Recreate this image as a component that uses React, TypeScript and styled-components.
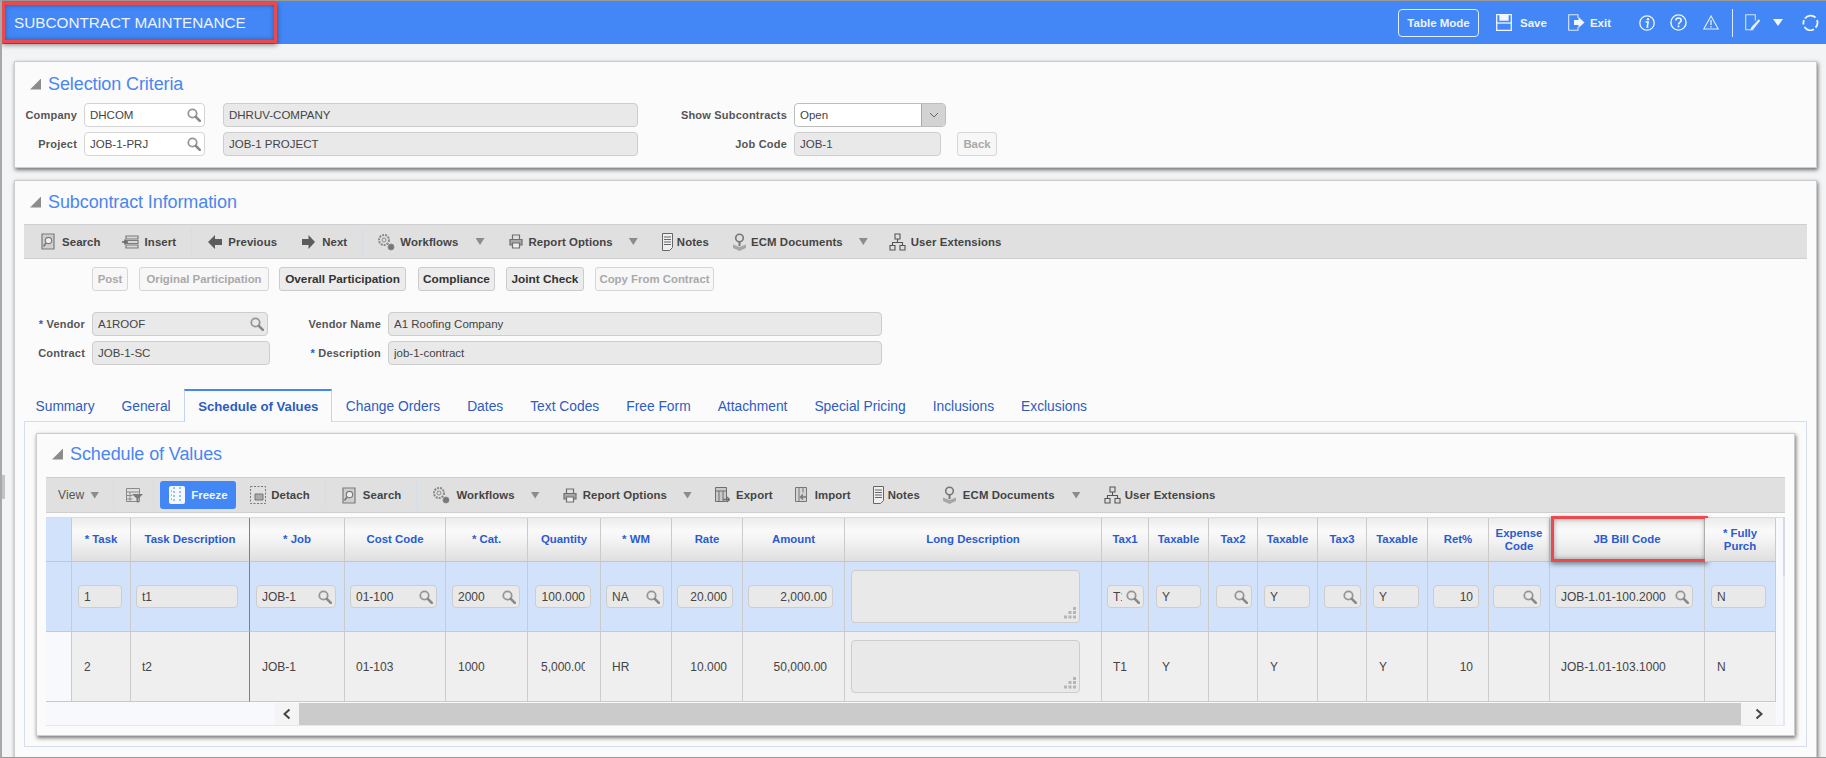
import React from "react";
import styled, { createGlobalStyle } from "styled-components";

const Global = createGlobalStyle`
  html, body { margin: 0; padding: 0; background: #f2f4f6; overflow: hidden; }
  body { font-family: "Liberation Sans", Arial, sans-serif; color: #444; }
  * { box-sizing: border-box; }
`;

const Page = styled.div`
  position: relative;
  width: 1826px;
  height: 758px;
  overflow: hidden;
  background: #f2f4f6;
  border-top: 1px solid #999;
  border-bottom: 1px solid #999;
  border-left: 2px solid #a8a8a8;
`;

const SideHandle = styled.div`
  position: absolute;
  left: 0;
  top: 474px;
  width: 3px;
  height: 24px;
  background: #c4c4c4;
`;

const Highlight = styled.div`
  position: absolute;
  border: 3px solid #ea4a4f;
  box-shadow: 0 2px 5px rgba(0, 0, 0, 0.45), inset 0 0 5px rgba(0, 0, 0, 0.35);
  pointer-events: none;
`;

const Header = styled.header`
  position: relative;
  height: 43px;
  background: #4287f5;
  display: flex;
  align-items: center;
  justify-content: space-between;
  padding: 0 7px 0 12px;
`;

const TitleBox = styled(Highlight)`
  left: 0;
  top: 1px;
  width: 275px;
  height: 41px;
`;

const HeadBox = styled(Highlight)`
  left: 1px;
  top: -2px;
  width: 157px;
  height: 46px;
`;

const PageTitle = styled.h1`
  margin: 0;
  font-size: 15.3px;
  font-weight: 400;
  color: #eef4ff;
`;

const HeaderActions = styled.div`
  display: flex;
  align-items: center;
`;

const ModeButton = styled.button`
  width: 81px;
  height: 28px;
  padding: 0;
  border: 1.5px solid #e4eeff;
  border-radius: 4px;
  background: transparent;
  color: #eef4ff;
  font: bold 11.5px "Liberation Sans", Arial, sans-serif;
`;

const HeaderAction = styled.span<{ $ml: number; $gap?: number }>`
  display: inline-flex;
  align-items: center;
  gap: ${p => p.$gap ?? 0}px;
  margin-left: ${p => p.$ml}px;
  color: #eef4ff;
  font-size: 11.5px;
  font-weight: bold;
`;

const HeaderDivider = styled.span`
  width: 1px;
  height: 28px;
  margin-left: 13px;
  background: #dce8ff;
`;

const Panel = styled.section<{ $mt: number; $pt: number; $pb: number }>`
  width: 1803px;
  margin: ${p => p.$mt}px 0 0 12px;
  padding: ${p => p.$pt}px 9px ${p => p.$pb}px 9px;
  background: #fbfbfb;
  border: 1px solid #ccc;
  box-shadow: 1px 2px 4px rgba(0, 0, 0, 0.55);
`;

const TitleRow = styled.div`
  display: flex;
  align-items: center;
  height: 24px;
  padding-left: 6px;
`;

const Collapse = styled.span`
  width: 11px;
  height: 11px;
  margin-right: 7px;
  background: #8c8c8c;
  clip-path: polygon(100% 0, 100% 100%, 0 100%);
`;

const SectionTitle = styled.h2`
  margin: 0;
  font-size: 18px;
  font-weight: 400;
  color: #4a86f2;
  letter-spacing: -0.1px;
`;

const FormRow = styled.div<{ $mt?: number }>`
  display: flex;
  align-items: center;
  height: 24px;
  margin-top: ${p => p.$mt ?? 5}px;
  font-size: 11.5px;
`;

const Label = styled.label<{ $w: number }>`
  width: ${p => p.$w}px;
  margin-right: 7px;
  flex: none;
  text-align: right;
  font-size: 11px;
  font-weight: bold;
  color: #555;
  letter-spacing: 0.2px;
  white-space: nowrap;
`;

const Star = styled.span`
  color: #2a5bd0;
`;

const Field = styled.div<{ $w: number; $h?: number; $white?: boolean; $ml?: number; $right?: boolean }>`
  width: ${p => p.$w}px;
  height: ${p => p.$h ?? 24}px;
  flex: none;
  display: flex;
  align-items: center;
  gap: 4px;
  margin-left: ${p => p.$ml ?? 0}px;
  padding: 0 ${p => (p.$right ? 5 : 3)}px 0 5px;
  background: ${p => (p.$white ? "#fff" : "#e9e9e9")};
  border: 1.5px solid ${p => (p.$white ? "#d4d4d4" : "#cdcdcd")};
  border-radius: 4px;
  color: #444;
`;

const FieldText = styled.span<{ $right?: boolean }>`
  flex: 1;
  min-width: 0;
  overflow: hidden;
  white-space: nowrap;
  text-align: ${p => (p.$right ? "right" : "left")};
`;

const Select = styled(Field)`
  padding-right: 0;
  border-color: #bdbdbd;
  overflow: hidden;
`;

const SelectToggle = styled.span`
  width: 24px;
  height: 100%;
  flex: none;
  display: flex;
  align-items: center;
  justify-content: center;
  background: #d3d3d3;
  border-left: 1px solid #aaa;
`;

const ActionButton = styled.button<{ $w: number; $off?: boolean; $ml?: number }>`
  width: ${p => p.$w}px;
  height: 24px;
  flex: none;
  margin-left: ${p => p.$ml ?? 0}px;
  padding: 0;
  background: ${p => (p.$off ? "#f7f7f7" : "#ececec")};
  border: 1px solid ${p => (p.$off ? "#d6d6d6" : "#cbcbcb")};
  border-radius: 3px;
  color: ${p => (p.$off ? "#a9a9a9" : "#333")};
  font: bold ${p => (p.$off ? 11.4 : 11.8)}px "Liberation Sans", Arial, sans-serif;
  white-space: nowrap;
`;

const ButtonRow = styled.div`
  display: flex;
  margin-top: 8px;
  padding-left: 68px;
`;

const Toolbar = styled.div<{ $h: number; $mt: number }>`
  display: flex;
  align-items: center;
  height: ${p => p.$h}px;
  margin-top: ${p => p.$mt}px;
  background: #e0e0e0;
  border-top: 1px solid #cfcfcf;
  border-bottom: 1px solid #cfcfcf;
`;

const ToolButton = styled.span<{ $ml: number; $gap: number }>`
  display: inline-flex;
  align-items: center;
  flex: none;
  gap: ${p => p.$gap}px;
  margin-left: ${p => p.$ml}px;
  font-size: 11.4px;
  font-weight: bold;
  color: #444;
  letter-spacing: 0.1px;
  white-space: nowrap;
`;

const ViewMenu = styled(ToolButton)`
  font-weight: 400;
  font-size: 12px;
  color: #555;
`;

const ToolDivider = styled.span<{ $ml: number }>`
  width: 1px;
  height: 28px;
  flex: none;
  margin-left: ${p => p.$ml}px;
  background: #d6dde6;
`;

const Caret = styled.span<{ $ml: number }>`
  width: 9px;
  height: 7px;
  flex: none;
  margin-left: ${p => p.$ml}px;
  background: #8c8c8c;
  clip-path: polygon(0 0, 100% 0, 50% 100%);
`;

const FreezeButton = styled.span<{ $ml: number }>`
  display: inline-flex;
  align-items: center;
  gap: 6px;
  width: 76px;
  height: 28px;
  flex: none;
  margin-left: ${p => p.$ml}px;
  padding-left: 9px;
  background: #4287f5;
  border-radius: 3px;
  color: #f1f6ff;
  font-size: 11.5px;
  font-weight: bold;
`;

const TabStrip = styled.nav`
  position: relative;
  z-index: 1;
  display: flex;
  height: 33px;
  margin: 24px 0 0 -2px;
`;

const Tab = styled.a<{ $active?: boolean }>`
  display: flex;
  align-items: center;
  height: ${p => (p.$active ? 33 : 32)}px;
  padding: 0 ${p => (p.$active ? 13 : 12.5)}px;
  font-size: ${p => (p.$active ? 13.2 : 13.8)}px;
  font-weight: ${p => (p.$active ? "bold" : 400)};
  color: #2f5cc0;
  background: ${p => (p.$active ? "#fbfbfb" : "transparent")};
  border-top: 2px solid ${p => (p.$active ? "#4287f5" : "transparent")};
  border-left: 1px solid ${p => (p.$active ? "#c2d4ee" : "transparent")};
  border-right: 1px solid ${p => (p.$active ? "#c2d4ee" : "transparent")};
  white-space: nowrap;
`;

const TabBody = styled.div`
  width: 1783px;
  height: 326px;
  margin-top: -1px;
  padding: 11px 11px 0;
  border: 1px solid #d5dfec;
  background: #fbfbfb;
`;

const InnerPanel = styled.section`
  height: 303px;
  padding: 8px 9px 0;
  background: #fbfbfb;
  border: 1px solid #ccc;
  box-shadow: 1px 2px 4px rgba(0, 0, 0, 0.55);
`;

const GridArea = styled.div`
  margin-top: 4px;
  display: flex;
  width: 1739px;
  background: #f8f9fc;
  border-top: 1px solid #dcdcdc;
  border-bottom: 1px solid #e4e7ec;
`;

const GridMain = styled.div`
  width: 1730px;
  flex: none;
`;

const GridTable = styled.table`
  position: relative;
  width: 1730px;
  table-layout: fixed;
  border-collapse: separate;
  border-spacing: 0;
`;

const HeadCell = styled.th<{ $freeze?: boolean }>`
  position: relative;
  height: 44px;
  padding: 0 2px;
  background: linear-gradient(#ebebeb 0%, #fafafa 30%, #f2f2f2 55%, #dfdfdf 100%);
  border-right: 1px solid ${p => (p.$freeze ? "#4287f5" : "#cbcbcb")};
  border-bottom: 1px solid #c6c6c6;
  font-size: 11.4px;
  line-height: 13px;
  font-weight: bold;
  color: #2a5bd0;
`;

const CornerCell = styled.th`
  background: #d2e2fa;
  border-right: 1px solid #cbcbcb;
  border-bottom: 1px solid #c6c6c6;
`;

const BodyCell = styled.td<{ $pad: number; $edit?: boolean; $freeze?: boolean }>`
  height: 70px;
  padding: 0 0 0 ${p => p.$pad}px;
  background: ${p => (p.$edit ? "#d2e2fa" : "#efefef")};
  border-right: 1px solid ${p => (p.$freeze ? "#4287f5" : "#cbcbcb")};
  border-bottom: 1px solid #c9c9c9;
  font-size: 12px;
  color: #444;
`;

const RowMark = styled.td<{ $edit?: boolean }>`
  background: ${p => (p.$edit ? "#d2e2fa" : "#f8f9fc")};
  border-right: 1px solid #cbcbcb;
  border-bottom: 1px solid #c9c9c9;
`;

const CellText = styled.div<{ $w: number; $right?: boolean }>`
  width: ${p => p.$w}px;
  margin-left: 6px;
  overflow: hidden;
  white-space: nowrap;
  text-align: ${p => (p.$right ? "right" : "left")};
`;

const NoteBox = styled.div`
  position: relative;
  width: 229px;
  height: 53px;
  background: #e9e9e9;
  border: 1.5px solid #cdcdcd;
  border-radius: 4px;
`;

const Grip = styled.svg`
  position: absolute;
  right: 2px;
  bottom: 2px;
`;

const ScrollBar = styled.div`
  display: flex;
  height: 22px;
  margin-top: 1px;
`;

const ScrollRest = styled.div`
  width: 229px;
  background: #f8f9fc;
`;

const ScrollEnd = styled.div<{ $w: number }>`
  width: ${p => p.$w}px;
  display: flex;
  align-items: center;
  justify-content: center;
  background: #f4f4f4;
`;

const ScrollTrack = styled.div`
  flex: 1;
  background: #cbcbcb;
`;

const SideRail = styled.div`
  width: 9px;
  flex: none;
  background:
    linear-gradient(#d5dae2, #d5dae2) right top / 2px 58px no-repeat,
    linear-gradient(#e6eaf0, #e6eaf0) right top / 2px 100% no-repeat;
`;

const GlassSvg = styled.svg`
  flex: none;
`;

const Grey = "#7b7b7b";

const Glass = () => (
  <GlassSvg width="14" height="14" viewBox="0 0 14 14" fill="none">
    <circle cx="5.500" cy="5.500" r="4.200" stroke="#969696" strokeWidth="1.800" />
    <path d="M8.800 8.800 12.800 12.800" stroke="#888" strokeWidth="2.600" strokeLinecap="round" />
  </GlassSvg>
);

const Chevron = ({ dir }: { dir: "l" | "r" | "d" }) => (
  <svg width="10" height="12" viewBox="0 0 10 12" fill="none">
    <path
      d={dir === "l" ? "M7.5 1.5 2.5 6l5 4.5" : dir === "r" ? "M2.5 1.5 7.5 6l-5 4.5" : "M1 4l4 4 4-4"}
      stroke={dir === "d" ? "#666" : "#444"}
      strokeWidth={dir === "d" ? 1 : 2}
    />
  </svg>
);

const DocSearchIcon = () => (
  <svg width="14" height="17" viewBox="0 0 14 17" fill="none" stroke={Grey} strokeWidth="1.2">
    <path d="M1 1h12v15H1z" fill="#cfcfcf" />
    <circle cx="7.5" cy="7.5" r="3.2" fill="#eee" />
    <path d="M5 10 2.5 13.5" strokeWidth="1.8" />
  </svg>
);

const InsertIcon = () => (
  <svg width="17" height="14" viewBox="0 0 17 14" fill="none" stroke={Grey} strokeWidth="1.2">
    <path d="M4 1h12v3H4zM4 5.5h12v3H4zM4 10h12v3H4z" fill="#d8d8d8" />
    <path d="M0 7h6M3 4.5v5" strokeWidth="1.6" stroke="#666" />
  </svg>
);

const ArrowLeft = () => (
  <svg width="14" height="14" viewBox="0 0 14 14" fill="#5c5c5c">
    <path d="M0 7 7 0v4h7v6H7v4z" />
  </svg>
);

const ArrowRight = () => (
  <svg width="13" height="14" viewBox="0 0 13 14" fill="#5c5c5c">
    <path d="M13 7 6.500 0v4H0v6h6.500v4z" />
  </svg>
);

const GearsIcon = () => (
  <svg width="18" height="18" viewBox="0 0 18 18" fill="none" stroke="#8a8a8a">
    <circle cx="7" cy="7" r="5" strokeWidth="2" strokeDasharray="2 1" />
    <circle cx="7" cy="7" r="2" strokeWidth="1" />
    <circle cx="14" cy="14" r="3" fill="#777" strokeWidth="1" />
  </svg>
);

const PrinterIcon = () => (
  <svg width="14" height="15" viewBox="0 0 14 15" fill="none" stroke="#6f6f6f" strokeWidth="1.2">
    <path d="M3.500 5V1h7v4" />
    <path d="M1 5.500h12V11H1z" fill="#a8a8a8" />
    <path d="M3.500 9h7v5h-7z" fill="#eee" />
  </svg>
);

const NotesIcon = () => (
  <svg width="11" height="18" viewBox="0 0 11 18" fill="none" stroke="#666" strokeWidth="1">
    <path d="M.5.500h10v14l-3 3h-7z" fill="#efefef" />
    <path d="M2 4h7M2 6.500h7M2 9h7M2 11.500h7" />
  </svg>
);

const EcmIcon = () => (
  <svg width="15" height="18" viewBox="0 0 15 18" fill="none">
    <circle cx="7.500" cy="5" r="3.800" stroke="#777" strokeWidth="1.600" />
    <path d="M7.500 9v4" stroke="#777" strokeWidth="2" />
    <path d="M1 11.500 7.500 14l6.500-2.500V15l-6.500 3L1 15z" fill="#a6a6a6" />
  </svg>
);

const OrgIcon = () => (
  <svg width="17" height="18" viewBox="0 0 17 18" fill="none" stroke="#555" strokeWidth="1.100">
    <path d="M6 1h5v5H6zM1 12.500h5V17H1zM11 12.500h5V17h-5z" />
    <path d="M8.500 6v3.500M3.500 12.500v-3h10v3" />
  </svg>
);

const ExportIcon = () => (
  <svg width="15" height="16" viewBox="0 0 15 16" fill="none" stroke="#6f6f6f">
    <path d="M.5.500h11v14H.5z" fill="#c9c9c9" />
    <path d="M.5 4h11M4 4v10M8 4v10" />
    <path d="M8 12.500h6M12 10l2.500 2.500L12 15" strokeWidth="1.300" />
  </svg>
);

const ImportIcon = () => (
  <svg width="13" height="16" viewBox="0 0 13 16" fill="none" stroke="#777">
    <path d="M.5.500h11v14H.5z" fill="#d4d4d4" />
    <path d="M4 .5v14M8 .5v5" />
    <path d="M12 10H6M8 7.500 5.500 10 8 12.500" strokeWidth="1.300" />
  </svg>
);

const FilterIcon = () => (
  <svg width="17" height="15" viewBox="0 0 17 15" fill="none" stroke="#8a8a8a">
    <path d="M.5.500h13v13H.5zM.5 4h13M.5 7.500h6M.5 11h6M4 4v9" />
    <path d="M6 6h11l-4.500 4.500V15l-2-1v-3.500z" fill="#7b7b7b" stroke="none" />
  </svg>
);

const FreezeIcon = () => (
  <svg width="16" height="18" viewBox="0 0 16 18">
    <rect width="16" height="18" rx="2" fill="#f4f8ff" />
    <path d="M5 1v16M11 1v16" stroke="#4287f5" strokeDasharray="2 2" />
    <path d="M2 5h1M2 9h1M2 13h1" stroke="#4287f5" />
  </svg>
);

const DetachIcon = () => (
  <svg width="16" height="18" viewBox="0 0 16 18" fill="none" stroke="#777">
    <rect x=".5" y=".5" width="15" height="17" strokeDasharray="2 1.500" />
    <path d="M5 8h8v6H5z" fill="#aaa" />
  </svg>
);

const SaveIcon = () => (
  <svg width="16" height="17" viewBox="0 0 16 17" fill="none" stroke="#f1f6ff" strokeWidth="1.300">
    <path d="M.7.700h14.600v15.600H.7z" />
    <path d="M4 1v5h8V1" fill="#f1f6ff" />
    <path d="M.7 9h14.600" />
  </svg>
);

const ExitIcon = () => (
  <svg width="17" height="17" viewBox="0 0 17 17" fill="none">
    <path d="M10 4V.7H.7v15.600H10V13" stroke="#dce8ff" strokeWidth="1.100" />
    <path d="M6 6h4.500V3l6 5.500-6 5.500v-3H6z" fill="#f1f6ff" />
  </svg>
);

const InfoIcon = () => (
  <svg width="16" height="16" viewBox="0 0 16 16" fill="none">
    <circle cx="8" cy="8" r="7.200" stroke="#f1f6ff" strokeWidth="1.300" />
    <circle cx="9" cy="4.200" r="1.200" fill="#f1f6ff" />
    <path d="M6.500 7h2.700l-1 5h1.200" stroke="#f1f6ff" strokeWidth="1.500" />
  </svg>
);

const HelpIcon = () => (
  <svg width="17" height="17" viewBox="0 0 17 17" fill="none" stroke="#f1f6ff">
    <circle cx="8.500" cy="8.500" r="7.600" strokeWidth="1.400" />
    <path d="M5.800 6.500c0-3.400 5.400-3.400 5.400 0 0 2-2.700 1.800-2.700 4" strokeWidth="1.600" />
    <path d="M8.500 11.500v1.800" strokeWidth="1.800" />
  </svg>
);

const WarnIcon = () => (
  <svg width="16" height="15" viewBox="0 0 16 15" fill="none" stroke="#e4eeff">
    <path d="M8 1 15.200 14H.8z" strokeWidth="1.100" />
    <path d="M8 5v5M8 11v1.500" strokeWidth="1.300" />
  </svg>
);

const EditIcon = () => (
  <svg width="15" height="17" viewBox="0 0 15 17" fill="none">
    <path d="M8.500 15.700H.7V.7h9.600v6" stroke="#cfdfff" strokeWidth="1.100" />
    <path d="M14 5 6.500 13l-1.500 3.500 3.500-1.500L15 7z" fill="#e4eeff" />
  </svg>
);

const DownIcon = () => (
  <svg width="10" height="7" viewBox="0 0 10 7" fill="#f1f6ff">
    <path d="M0 0h10L5 7z" />
  </svg>
);

const RefreshIcon = () => (
  <svg width="17" height="17" viewBox="0 0 17 17" fill="none" stroke="#f1f6ff" strokeWidth="1.800">
    <path d="M3 4.500A7 7 0 0 1 13.500 3.500" />
    <path d="M15 6a7 7 0 0 1-1.500 7.500" />
    <path d="M12 15.300A7 7 0 0 1 2.500 13M1.600 10.500A7 7 0 0 1 2 6" />
  </svg>
);

type ColDef = {
  title: string;
  w: number;
  fieldW: number;
  pad: number;
  edit: string;
  value: string;
  lookup?: boolean;
  right?: boolean;
  note?: boolean;
  freeze?: boolean;
};

const columns: ColDef[] = [
  { title: "* Task", w: 59, fieldW: 44, pad: 6, edit: "1", value: "2" },
  { title: "Task Description", w: 119, fieldW: 102, pad: 5, edit: "t1", value: "t2", freeze: true },
  { title: "* Job", w: 95, fieldW: 80, pad: 6, edit: "JOB-1", value: "JOB-1", lookup: true },
  { title: "Cost Code", w: 101, fieldW: 87, pad: 5, edit: "01-100", value: "01-103", lookup: true },
  { title: "* Cat.", w: 82, fieldW: 68, pad: 6, edit: "2000", value: "1000", lookup: true },
  { title: "Quantity", w: 73, fieldW: 56, pad: 7, edit: "100.000", value: "5,000.00", right: true },
  { title: "* WM", w: 71, fieldW: 58, pad: 5, edit: "NA", value: "HR", lookup: true },
  { title: "Rate", w: 71, fieldW: 56, pad: 5, edit: "20.000", value: "10.000", right: true },
  { title: "Amount", w: 102, fieldW: 85, pad: 5, edit: "2,000.00", value: "50,000.00", right: true },
  { title: "Long Description", w: 257, fieldW: 229, pad: 6, edit: "", value: "", note: true },
  { title: "Tax1", w: 47, fieldW: 37, pad: 5, edit: "T1", value: "T1", lookup: true },
  { title: "Taxable", w: 60, fieldW: 45, pad: 7, edit: "Y", value: "Y" },
  { title: "Tax2", w: 49, fieldW: 36, pad: 7, edit: "", value: "", lookup: true },
  { title: "Taxable", w: 60, fieldW: 46, pad: 6, edit: "Y", value: "Y" },
  { title: "Tax3", w: 49, fieldW: 37, pad: 6, edit: "", value: "", lookup: true },
  { title: "Taxable", w: 61, fieldW: 46, pad: 6, edit: "Y", value: "Y" },
  { title: "Ret%", w: 61, fieldW: 46, pad: 5, edit: "10", value: "10", right: true },
  { title: "Expense Code", w: 61, fieldW: 48, pad: 4, edit: "", value: "", lookup: true },
  { title: "JB Bill Code", w: 155, fieldW: 138, pad: 5, edit: "JOB-1.01-100.2000", value: "JOB-1.01-103.1000", lookup: true },
  { title: "* Fully Purch", w: 71, fieldW: 55, pad: 6, edit: "N", value: "N" },
];

const Note = () => (
  <NoteBox>
    <Grip width="14" height="14" viewBox="0 0 14 14" fill="#b5b5b5">
      <path d="M10 1h3v3h-3zM10 5h3v3h-3zM5.500 5h3v3h-3zM10 9.500h3v3h-3zM5.500 9.500h3v3h-3zM1 9.500h3v3H1z" />
    </Grip>
  </NoteBox>
);

const Tool = ({ ml, gap = 5, icon, children }: { ml: number; gap?: number; icon: React.ReactNode; children?: React.ReactNode }) => (
  <ToolButton $ml={ml} $gap={gap}>
    {icon}
    {children && <span>{children}</span>}
  </ToolButton>
);

const App = () => (
  <Page>
    <Global />
    <SideHandle />
    <Header>
      <PageTitle>SUBCONTRACT MAINTENANCE</PageTitle>
      <TitleBox />
      <HeaderActions>
        <ModeButton>Table Mode</ModeButton>
        <HeaderAction $ml={17} $gap={8}><SaveIcon />Save</HeaderAction>
        <HeaderAction $ml={21} $gap={5}><ExitIcon />Exit</HeaderAction>
        <HeaderAction $ml={28}><InfoIcon /></HeaderAction>
        <HeaderAction $ml={15}><HelpIcon /></HeaderAction>
        <HeaderAction $ml={16}><WarnIcon /></HeaderAction>
        <HeaderDivider />
        <HeaderAction $ml={12}><EditIcon /></HeaderAction>
        <HeaderAction $ml={13}><DownIcon /></HeaderAction>
        <HeaderAction $ml={19}><RefreshIcon /></HeaderAction>
      </HeaderActions>
    </Header>

    <Panel $mt={17} $pt={10} $pb={11}>
      <TitleRow>
        <Collapse />
        <SectionTitle>Selection Criteria</SectionTitle>
      </TitleRow>
      <FormRow $mt={7}>
        <Label $w={53}>Company</Label>
        <Field $w={121} $white><FieldText>DHCOM</FieldText><Glass /></Field>
        <Field $w={415} $ml={18}><FieldText>DHRUV-COMPANY</FieldText></Field>
        <Label $w={149}>Show Subcontracts</Label>
        <Select $w={152} $white><FieldText>Open</FieldText><SelectToggle><Chevron dir="d" /></SelectToggle></Select>
      </FormRow>
      <FormRow>
        <Label $w={53}>Project</Label>
        <Field $w={121} $white><FieldText>JOB-1-PRJ</FieldText><Glass /></Field>
        <Field $w={415} $ml={18}><FieldText>JOB-1 PROJECT</FieldText></Field>
        <Label $w={149}>Job Code</Label>
        <Field $w={147}><FieldText>JOB-1</FieldText></Field>
        <ActionButton $off $w={40} $ml={16}>Back</ActionButton>
      </FormRow>
    </Panel>

    <Panel $mt={12} $pt={9} $pb={10}>
      <TitleRow>
        <Collapse />
        <SectionTitle>Subcontract Information</SectionTitle>
      </TitleRow>
      <Toolbar $h={35} $mt={10}>
        <Tool ml={17} gap={7} icon={<DocSearchIcon />}>Search</Tool>
        <Tool ml={21} gap={6} icon={<InsertIcon />}>Insert</Tool>
        <ToolDivider $ml={15} />
        <Tool ml={16} gap={6} icon={<ArrowLeft />}>Previous</Tool>
        <Tool ml={25} gap={7} icon={<ArrowRight />}>Next</Tool>
        <ToolDivider $ml={15} />
        <Tool ml={14} gap={5} icon={<GearsIcon />}>Workflows</Tool>
        <Caret $ml={17} />
        <Tool ml={24} gap={6} icon={<PrinterIcon />}>Report Options</Tool>
        <Caret $ml={16} />
        <Tool ml={24} gap={4} icon={<NotesIcon />}>Notes</Tool>
        <Tool ml={23} gap={4} icon={<EcmIcon />}>ECM Documents</Tool>
        <Caret $ml={16} />
        <Tool ml={21} gap={5} icon={<OrgIcon />}>User Extensions</Tool>
      </Toolbar>
      <ButtonRow>
        <ActionButton $off $w={36}>Post</ActionButton>
        <ActionButton $off $w={130} $ml={11}>Original Participation</ActionButton>
        <ActionButton $w={127} $ml={10}>Overall Participation</ActionButton>
        <ActionButton $w={77} $ml={12}>Compliance</ActionButton>
        <ActionButton $w={78} $ml={11}>Joint Check</ActionButton>
        <ActionButton $off $w={119} $ml={11}>Copy From Contract</ActionButton>
      </ButtonRow>
      <FormRow $mt={21}>
        <Label $w={61}><Star>* </Star>Vendor</Label>
        <Field $w={176}><FieldText>A1ROOF</FieldText><Glass /></Field>
        <Label $w={113}>Vendor Name</Label>
        <Field $w={494}><FieldText>A1 Roofing Company</FieldText></Field>
      </FormRow>
      <FormRow>
        <Label $w={61}>Contract</Label>
        <Field $w={178}><FieldText>JOB-1-SC</FieldText></Field>
        <Label $w={111}><Star>* </Star>Description</Label>
        <Field $w={494}><FieldText>job-1-contract</FieldText></Field>
      </FormRow>
      <TabStrip>
        <Tab>Summary</Tab>
        <Tab>General</Tab>
        <Tab $active>Schedule of Values</Tab>
        <Tab>Change Orders</Tab>
        <Tab>Dates</Tab>
        <Tab>Text Codes</Tab>
        <Tab>Free Form</Tab>
        <Tab>Attachment</Tab>
        <Tab>Special Pricing</Tab>
        <Tab>Inclusions</Tab>
        <Tab>Exclusions</Tab>
      </TabStrip>
      <TabBody>
        <InnerPanel>
          <TitleRow>
            <Collapse />
            <SectionTitle>Schedule of Values</SectionTitle>
          </TitleRow>
          <Toolbar $h={36} $mt={11}>
            <ViewMenu $ml={12} $gap={0}>View</ViewMenu>
            <Caret $ml={6} />
            <ToolDivider $ml={14} />
            <Tool ml={12} icon={<FilterIcon />} />
            <ToolDivider $ml={10} />
            <FreezeButton $ml={6}><FreezeIcon />Freeze</FreezeButton>
            <Tool ml={14} gap={5} icon={<DetachIcon />}>Detach</Tool>
            <ToolDivider $ml={15} />
            <Tool ml={16} gap={7} icon={<DocSearchIcon />}>Search</Tool>
            <ToolDivider $ml={15} />
            <Tool ml={15} gap={6} icon={<GearsIcon />}>Workflows</Tool>
            <Caret $ml={16} />
            <Tool ml={23} gap={6} icon={<PrinterIcon />}>Report Options</Tool>
            <Caret $ml={16} />
            <Tool ml={23} gap={6} icon={<ExportIcon />}>Export</Tool>
            <Tool ml={22} gap={7} icon={<ImportIcon />}>Import</Tool>
            <Tool ml={22} gap={4} icon={<NotesIcon />}>Notes</Tool>
            <Tool ml={22} gap={6} icon={<EcmIcon />}>ECM Documents</Tool>
            <Caret $ml={17} />
            <Tool ml={23} gap={4} icon={<OrgIcon />}>User Extensions</Tool>
          </Toolbar>
          <GridArea>
            <GridMain>
              <GridTable>
                <colgroup>
                  <col width={26} />
                  {columns.map((c, i) => <col key={i} width={c.w} />)}
                </colgroup>
                <thead>
                  <tr>
                    <CornerCell />
                    {columns.map((c, i) => (
                      <HeadCell key={i} $freeze={c.freeze}>
                        {c.title}
                        {c.title === "JB Bill Code" && <HeadBox />}
                      </HeadCell>
                    ))}
                  </tr>
                </thead>
                <tbody>
                  <tr>
                    <RowMark $edit />
                    {columns.map((c, i) => (
                      <BodyCell key={i} $edit $pad={c.pad} $freeze={c.freeze}>
                        {c.note ? <Note /> : (
                          <Field $w={c.fieldW} $h={23} $right={c.right}>
                            <FieldText $right={c.right}>{c.edit}</FieldText>
                            {c.lookup && <Glass />}
                          </Field>
                        )}
                      </BodyCell>
                    ))}
                  </tr>
                  <tr>
                    <RowMark />
                    {columns.map((c, i) => (
                      <BodyCell key={i} $pad={c.pad} $freeze={c.freeze}>
                        {c.note ? <Note /> : <CellText $w={c.fieldW - 12} $right={c.right}>{c.value}</CellText>}
                      </BodyCell>
                    ))}
                  </tr>
                </tbody>
              </GridTable>
              <ScrollBar>
                <ScrollRest />
                <ScrollEnd $w={24}><Chevron dir="l" /></ScrollEnd>
                <ScrollTrack />
                <ScrollEnd $w={35}><Chevron dir="r" /></ScrollEnd>
              </ScrollBar>
            </GridMain>
            <SideRail />
          </GridArea>
        </InnerPanel>
      </TabBody>
    </Panel>
  </Page>
);

export default App;
